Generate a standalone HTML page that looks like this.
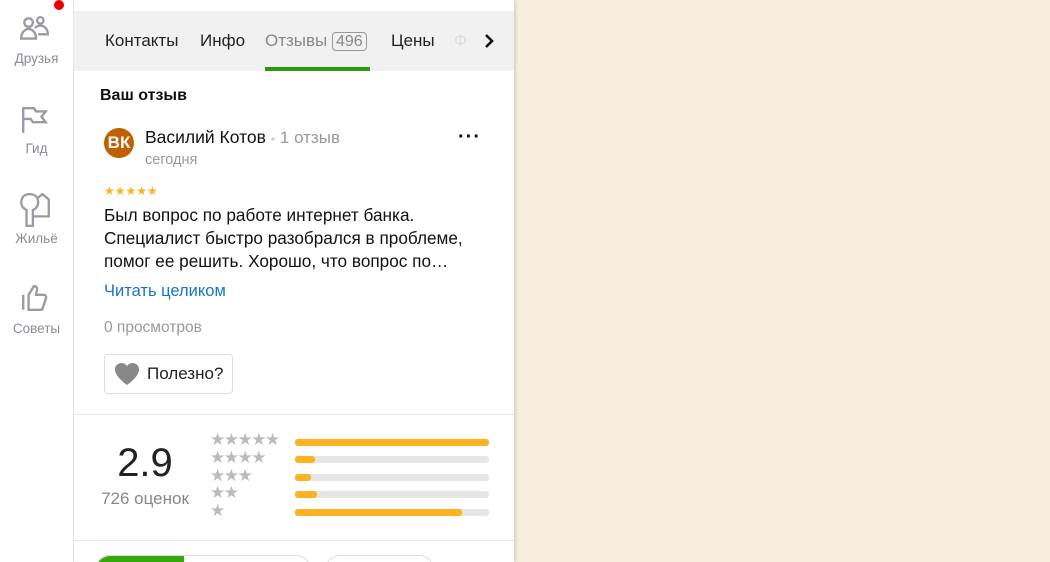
<!DOCTYPE html>
<html><head><meta charset="utf-8"><style>
*{margin:0;padding:0;box-sizing:border-box}
html{height:562px;overflow:hidden}
body{width:1050px;height:562px;overflow:hidden;background:#f6efde;font-family:"Liberation Sans","DejaVu Sans",sans-serif;position:relative}
.side{position:absolute;left:0;top:0;width:74px;height:562px;background:#fff;border-right:1px solid #e6e6e6}
.si{position:absolute;left:0;width:73px;text-align:center;font-size:13.5px;color:#8a8a94}
.panel{position:absolute;left:74px;top:0;width:440px;height:562px;background:#fff;box-shadow:2px 0 3px rgba(0,0,0,.12);overflow:hidden}
.tabs{position:absolute;top:11px;left:0;width:440px;height:60px;background:#f1f1f1}
.tab{position:absolute;top:20px;font-size:17px;color:#222}
.abs{position:absolute}
</style></head><body>
<div class="side">
  <div style="position:absolute;left:54px;top:0;width:10px;height:10px;border-radius:50%;background:#e00"></div>
  <svg class="abs" style="left:19px;top:15px" width="32" height="30" viewBox="0 0 30 28" fill="none" stroke="#9a9aa6" stroke-width="2.2"><circle cx="9" cy="7" r="4"/><circle cx="20" cy="5" r="3"/><path d="M2 22c0-6 4-9 7-9s7 3 7 9z"/><path d="M15 12c2-2 4-2 5-2 4 0 7 3 7 8h-9"/></svg>
  <div class="si" style="top:51px">Друзья</div>
  <svg class="abs" style="left:21px;top:105px" width="28" height="30" viewBox="0 0 26 28" fill="none" stroke="#9a9aa6" stroke-width="2.2"><path d="M2 2v24M2 3h10l2 3h9l-4 5 4 5H11l-2-3H2"/></svg>
  <div class="si" style="top:141px">Гид</div>
  <svg class="abs" style="left:19px;top:192px" width="32" height="36" viewBox="0 0 30 34" fill="none" stroke="#9a9aa6" stroke-width="2.2"><path d="M10 2c-5 0-8 3-8 8 0 4 3 6 5 7v15h6V17c3-1 5-4 5-7 0-5-3-8-8-8z"/><path d="M17 6l5-4 6 5v16H14"/></svg>
  <div class="si" style="top:231px">Жильё</div>
  <svg class="abs" style="left:21px;top:283px" width="28" height="30" viewBox="0 0 26 28" fill="none" stroke="#9a9aa6" stroke-width="2.2"><path d="M2 11v14M7 11l5-8c2 0 3 1 3 3l-1 5h7c2 0 3 2 2 4l-3 9c0 1-1 1-2 1H7z"/></svg>
  <div class="si" style="top:321px">Советы</div>
</div>
<div class="panel">
  <div class="tabs">
    <div class="tab" style="left:31px">Контакты</div>
    <div class="tab" style="left:126px">Инфо</div>
    <div class="tab" style="left:191px;color:#888">Отзывы <span style="border:1px solid #999;border-radius:4px;padding:0 3px;font-size:16px">496</span></div>
    <div class="tab" style="left:317px">Цены</div>
    <div class="tab" style="left:380px;color:#ddd">Ф</div>
    <svg class="abs" style="left:409px;top:22px" width="12" height="16" viewBox="0 0 12 16"><path d="M3 2l6 6-6 6" stroke="#111" stroke-width="2.6" fill="none"/></svg>
    <div class="abs" style="left:191px;top:56px;width:105px;height:4px;background:#2c9a0a"></div>
  </div>
  <div class="abs" style="left:26px;top:87px;font-size:16px;font-weight:bold;color:#111">Ваш отзыв</div>
  <div class="abs" style="left:30px;top:128px;width:30px;height:30px;border-radius:50%;background:#c06000;color:#fff;font-weight:bold;font-size:17px;text-align:center;line-height:30px">ВК</div>
  <div class="abs" style="left:71px;top:127px;font-size:17.5px;color:#111">Василий Котов <span style="color:#ccc;font-size:12px">•</span> <span style="color:#999;font-size:17px">1 отзыв</span></div>
  <div class="abs" style="left:71px;top:152px;font-size:14.5px;color:#999">сегодня</div>
  <div class="abs" style="left:384px;top:132px;font-size:20px;letter-spacing:1px;color:#111;line-height:10px;font-weight:bold">···</div>
  <div class="abs" style="left:30px;top:184px;font-size:12px;color:#fdb221;letter-spacing:0">★★★★★</div>
  <div class="abs" style="left:30px;top:204px;font-size:17.2px;line-height:23px;color:#111;width:410px;white-space:nowrap">Был вопрос по работе интернет банка.<br>Специалист быстро разобрался в проблеме,<br>помог ее решить. Хорошо, что вопрос по…</div>
  <div class="abs" style="left:30px;top:282px;font-size:16.5px;color:#1a73c8">Читать целиком</div>
  <div class="abs" style="left:30px;top:319px;font-size:15.5px;color:#999">0 просмотров</div>
  <div class="abs" style="left:30px;top:354px;width:129px;height:40px;border:1px solid #ddd;border-radius:4px;font-size:17px;color:#222;line-height:38px;padding-left:42px">Полезно?</div>
  <svg class="abs" style="left:40px;top:362px" width="26" height="24" viewBox="0 0 26 24"><path d="M13 23S1 15 1 7.5C1 3.5 4 1 7.5 1c2.5 0 4.5 1.5 5.5 3 1-1.5 3-3 5.5-3C22 1 25 3.5 25 7.5 25 15 13 23 13 23z" fill="#888"/></svg>
  <div class="abs" style="left:0;top:414px;width:440px;height:1px;background:#e6e6e6"></div>
  <div class="abs" style="left:21px;top:441px;width:100px;text-align:center;font-size:40px;color:#222">2.9</div>
  <div class="abs" style="left:16px;top:489px;width:110px;text-align:center;font-size:17px;color:#888">726 оценок</div>
  <div class="abs" style="left:136px;top:431px;font-size:17px;line-height:17.8px;color:#bbb;letter-spacing:-1.5px">★★★★★<br>★★★★<br>★★★<br>★★<br>★</div>
  <div class="abs" style="left:221px;top:439px;width:194px;height:7px;border-radius:3px;background:#fdb221"></div>
  <div class="abs" style="left:221px;top:456px;width:194px;height:7px;border-radius:3px;background:#e6e6e6"><div style="width:20px;height:7px;border-radius:3px;background:#fdb221"></div></div>
  <div class="abs" style="left:221px;top:474px;width:194px;height:7px;border-radius:3px;background:#e6e6e6"><div style="width:16px;height:7px;border-radius:3px;background:#fdb221"></div></div>
  <div class="abs" style="left:221px;top:491px;width:194px;height:7px;border-radius:3px;background:#e6e6e6"><div style="width:22px;height:7px;border-radius:3px;background:#fdb221"></div></div>
  <div class="abs" style="left:221px;top:509px;width:194px;height:7px;border-radius:3px;background:#e6e6e6"><div style="width:167px;height:7px;border-radius:3px;background:#fdb221"></div></div>
  <div class="abs" style="left:0;top:540px;width:440px;height:1px;background:#e6e6e6"></div>
  <div class="abs" style="left:21px;top:555px;width:216px;height:30px;border:1px solid #ddd;border-radius:15px;overflow:hidden"><div style="width:88px;height:30px;background:#35a80c"></div></div>
  <div class="abs" style="left:251px;top:555px;width:109px;height:30px;border:1px solid #ddd;border-radius:15px"></div>
</div>
</body></html>
